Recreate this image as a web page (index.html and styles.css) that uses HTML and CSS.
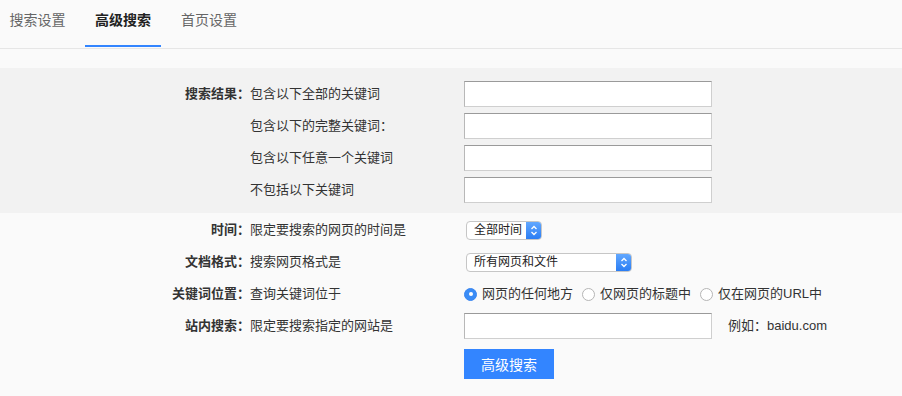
FILE: index.html
```html
<!DOCTYPE html>
<html lang="zh-CN">
<head>
<meta charset="utf-8">
<title>高级搜索</title>
<link rel="stylesheet" href="styles.css">
</head>
<body>
<div class="page">
  <div class="tabs">
    <div class="tab">搜索设置</div>
    <div class="tab active">高级搜索</div>
    <div class="tab">首页设置</div>
  </div>
  <div class="spacer"></div>
  <div class="band">
    <div class="row">
      <div class="label">搜索结果：</div>
      <div class="desc">包含以下全部的关键词</div>
      <div class="ctrl"><input class="text" type="text"></div>
    </div>
    <div class="row">
      <div class="label"></div>
      <div class="desc">包含以下的完整关键词：</div>
      <div class="ctrl"><input class="text" type="text"></div>
    </div>
    <div class="row">
      <div class="label"></div>
      <div class="desc">包含以下任意一个关键词</div>
      <div class="ctrl"><input class="text" type="text"></div>
    </div>
    <div class="row">
      <div class="label"></div>
      <div class="desc">不包括以下关键词</div>
      <div class="ctrl"><input class="text" type="text"></div>
    </div>
  </div>
  <div class="rest">
    <div class="row">
      <div class="label">时间：</div>
      <div class="desc">限定要搜索的网页的时间是</div>
      <div class="ctrl">
        <div class="select s1"><span class="sel-text">全部时间</span><span class="stepper"><svg width="8" height="11" viewBox="0 0 8 11"><path d="M1.5 4 L4 1.5 L6.5 4 M1.5 7 L4 9.5 L6.5 7" fill="none" stroke="#fff" stroke-width="1.3"/></svg></span></div>
      </div>
    </div>
    <div class="row">
      <div class="label">文档格式：</div>
      <div class="desc">搜索网页格式是</div>
      <div class="ctrl">
        <div class="select s2"><span class="sel-text">所有网页和文件</span><span class="stepper"><svg width="8" height="11" viewBox="0 0 8 11"><path d="M1.5 4 L4 1.5 L6.5 4 M1.5 7 L4 9.5 L6.5 7" fill="none" stroke="#fff" stroke-width="1.3"/></svg></span></div>
      </div>
    </div>
    <div class="row">
      <div class="label">关键词位置：</div>
      <div class="desc">查询关键词位于</div>
      <div class="ctrl radios">
        <span class="radio on"></span><span class="rtext">网页的任何地方</span>
        <span class="radio"></span><span class="rtext">仅网页的标题中</span>
        <span class="radio"></span><span class="rtext">仅在网页的URL中</span>
      </div>
    </div>
    <div class="row">
      <div class="label">站内搜索：</div>
      <div class="desc">限定要搜索指定的网站是</div>
      <div class="ctrl"><input class="text" type="text"><span class="eg">例如：baidu.com</span></div>
    </div>
    <div class="btnrow">
      <button class="btn">高级搜索</button>
    </div>
  </div>
</div>
</body>
</html>
```

FILE: styles.css
```css
* { box-sizing: border-box; }
html, body { margin: 0; padding: 0; }
body {
  width: 902px;
  height: 396px;
  overflow: hidden;
  background: #fafafa;
  font-family: "Liberation Sans", "Noto Sans CJK SC", sans-serif;
  color: #333;
  font-size: 13px;
}
.tabs {
  display: flex;
  height: 49px;
  border-bottom: 1px solid #e6e6e6;
  gap: 10px;
}
.tab {
  width: 76px;
  text-align: center;
  font-size: 14px;
  line-height: 40px;
  color: #666;
  height: 48px;
}
.tab:first-child { width: 75px; }
.tab.active {
  color: #222;
  font-weight: bold;
  border-bottom: 2px solid #3385ff;
  height: 47px;
}
.spacer { height: 19px; }
.band {
  background: #f2f2f2;
  padding: 10px 0 7px;
}
.rest { padding-top: 1px; }
.row {
  display: flex;
  align-items: center;
  height: 32px;
}
.label {
  width: 250px;
  text-align: right;
  font-weight: bold;
  color: #333;
  line-height: 16px;
}
.desc {
  width: 214px;
  line-height: 16px;
  color: #333;
}
.ctrl {
  display: flex;
  align-items: center;
}
.text {
  width: 248px;
  height: 26px;
  margin: 0;
  border: 1px solid #cfcfcf;
  border-top-color: #9a9a9a;
  border-left-color: #b8b8b8;
  background: #fff;
  outline: none;
  padding: 0 4px;
}
.select {
  display: flex;
  align-items: stretch;
  height: 19px;
  margin-left: 2px;
  border: 1px solid #c6c6c6;
  border-radius: 4px;
  background: #fff;
  overflow: hidden;
  font-size: 12px;
  color: #222;
}
.s1 { width: 76px; }
.s2 { width: 166px; }
.sel-text {
  flex: 1;
  padding-left: 7px;
  line-height: 17px;
}
.stepper {
  width: 15px;
  background: linear-gradient(#62a8ff, #2a7df4);
  display: flex;
  align-items: center;
  justify-content: center;
}
.radio {
  width: 13px;
  height: 13px;
  border-radius: 50%;
  border: 1px solid #b5b5b5;
  background: #fff;
  margin-right: 5px;
  display: inline-flex;
  align-items: center;
  justify-content: center;
}
.radio.on {
  border-color: #3a86f0;
  background: #3a8cf6;
}
.radio.on::after {
  content: "";
  width: 4px;
  height: 4px;
  border-radius: 50%;
  background: #fff;
}
.rtext {
  margin-right: 9px;
  line-height: 16px;
  font-size: 13px;
}
.eg {
  margin-left: 16px;
  line-height: 16px;
}
.btnrow {
  padding-left: 464px;
  padding-top: 7px;
}
.btn {
  width: 90px;
  height: 30px;
  border: none;
  margin: 0;
  padding: 0;
  background: #3385ff;
  color: #fff;
  font-family: "Liberation Sans", "Noto Sans CJK SC", sans-serif;
  font-size: 14px;
}
```
